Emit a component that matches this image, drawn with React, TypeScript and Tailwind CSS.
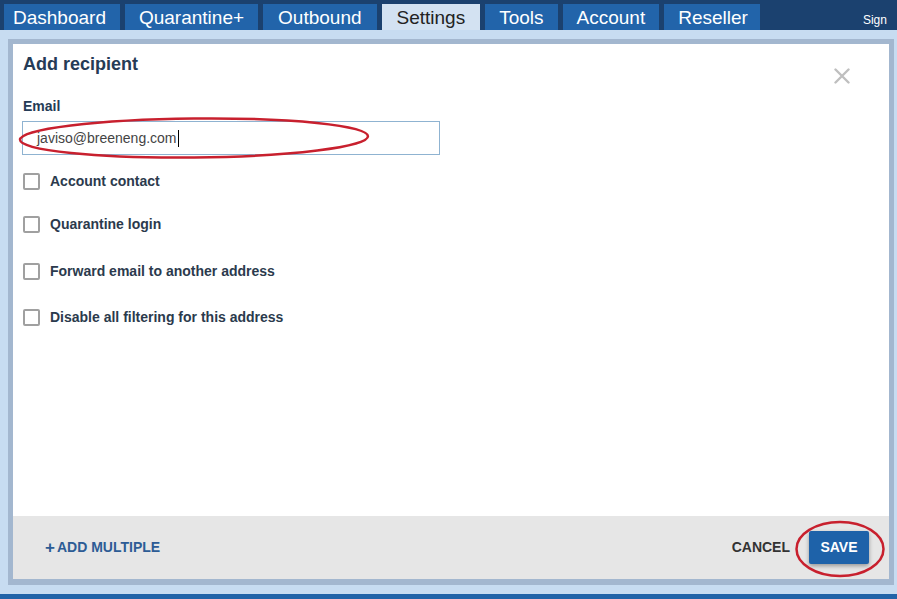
import React from "react";

const tabs = [
  { t: "Dashboard", p: "pl-[9px] pr-[14px]" },
  { t: "Quarantine+", p: "px-[14px]" },
  { t: "Outbound", p: "px-[15px]" },
  { t: "Settings", p: "px-[15px]" },
  { t: "Tools", p: "px-[14px]" },
  { t: "Account", p: "px-[14px]" },
  { t: "Reseller", p: "pl-[14px] pr-[12px]" },
];
const checks = [
  { label: "Account contact", mt: "mt-[16px]" },
  { label: "Quarantine login", mt: "mt-[23px]" },
  { label: "Forward email to another address", mt: "mt-[27px]" },
  { label: "Disable all filtering for this address", mt: "mt-[26px]" },
];

export default function App() {
  return (
    <div className="w-[897px] h-[599px] overflow-hidden bg-[#c7dcf1] flex flex-col" style={{ fontFamily: '"Liberation Sans", Arial, sans-serif' }}>
      {/* Top nav */}
      <div className="h-[30px] shrink-0 bg-[#1b416f] flex items-end overflow-hidden">
        <div className="flex gap-[5px] ml-[4px] shrink-0">
          {tabs.map(({ t, p }) => (
            <div
              key={t}
              className={
                "h-[26px] flex items-center text-[19px] leading-none whitespace-nowrap " +
                p +
                " " +
                (t === "Settings" ? "bg-[#d3e2f2] text-[#222]" : "bg-[#2264aa] text-white")
              }
            >
              {t}
            </div>
          ))}
        </div>
        <div className="ml-[103px] shrink-0 whitespace-nowrap text-white text-[12px] leading-none pb-[4px]">Sign</div>
      </div>

      {/* Modal area */}
      <div className="flex-1 pt-[9px] pb-[9px] pl-[8px] pr-[3px] flex">
        <div className="flex-1 flex flex-col border-l-[5px] border-r-[5px] border-t-[5px] border-b-[6px] border-[#a3b7cf]">
          <div className="relative flex-1 bg-white pl-[10px] pt-[10px]">
            <div className="text-[18px] font-bold text-[#253b56] leading-[20px]">Add recipient</div>
            <div className="mt-[24px] text-[14px] font-bold text-[#253b56] leading-[16px]">Email</div>
            <div className="mt-[7px] ml-[-1px] w-[418px] h-[34px] border border-[#8fb3d1] flex items-center pl-[14px] text-[14px] text-[#444]">
              javiso@breeneng.com<span className="inline-block w-px h-[17px] bg-black ml-[1px]" />
            </div>
            {checks.map((c) => (
              <div key={c.label} className={c.mt + " flex items-center h-[20px]"}>
                <div className="w-[17px] h-[17px] border-2 border-[#a0a0a0] rounded-[2px] bg-white" />
                <span className="ml-[10px] text-[14px] font-bold text-[#2b3a4d]">{c.label}</span>
              </div>
            ))}

            {/* close X */}
            <svg className="absolute top-[24px] right-[39px]" width="16" height="16" viewBox="0 0 16 16">
              <path d="M1.5 1.5 L14.5 14.5 M14.5 1.5 L1.5 14.5" stroke="#bfbfbf" strokeWidth="2.4" strokeLinecap="round" />
            </svg>

            {/* red annotation ellipse */}
            <svg className="absolute left-[4px] top-[72px] pointer-events-none" width="354" height="44" viewBox="0 0 354 44">
              <ellipse cx="177" cy="22" rx="174" ry="19.5" fill="none" stroke="#c8202e" strokeWidth="2.5" transform="rotate(-0.6 177 22)" />
            </svg>
          </div>

          {/* footer */}
          <div className="relative h-[63px] shrink-0 bg-[#e6e6e6] flex items-center pl-[32px] pr-[20px]">
            <div className="text-[14px] font-bold text-[#2d5c95] flex items-center">
              <span className="text-[17px] mr-[2px] leading-none">+</span>ADD MULTIPLE
            </div>
            <div className="ml-auto text-[14px] font-bold text-[#333]">CANCEL</div>
            <div className="ml-[19px] w-[60px] h-[33px] bg-[#1e62a9] rounded-[2px] shadow-[0_2px_4px_rgba(0,0,0,0.35)] flex items-center justify-center text-white text-[14px] font-bold">
              SAVE
            </div>
            <svg className="absolute left-[781px] top-[4px] pointer-events-none" width="92" height="58" viewBox="0 0 92 58">
              <ellipse cx="46" cy="29" rx="43.5" ry="27" fill="none" stroke="#c8202e" strokeWidth="2.5" />
            </svg>
          </div>
        </div>
      </div>
      <div className="h-[5px] shrink-0 bg-[#2163a8]" />
    </div>
  );
}
